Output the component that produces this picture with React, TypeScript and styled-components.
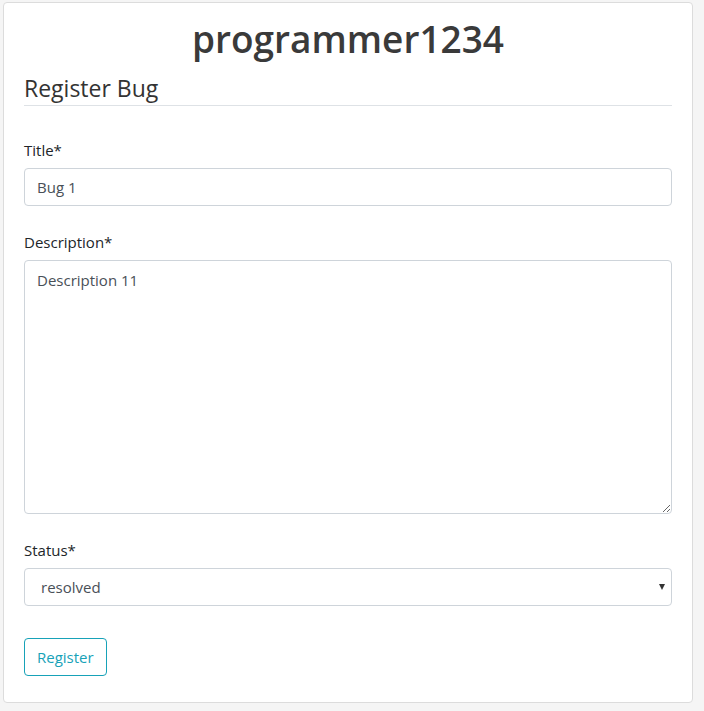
import React, { useState } from 'react';
import styled, { createGlobalStyle } from 'styled-components';

const GlobalStyle = createGlobalStyle`
  * { box-sizing: border-box; }
  body {
    margin: 0;
    background: #f5f5f5;
    font-family: "Segoe UI", "Open Sans", "Noto Sans", sans-serif;
    color: #212529;
  }
`;

const Page = styled.div`
  padding: 2px 11px 9px 3px;
`;

const Card = styled.div`
  background: #fff;
  border: 1px solid #dcdcdc;
  border-radius: 4px;
  padding: 12px 20px 26px 20px;
`;

const Heading = styled.h1`
  margin: 0;
  text-align: center;
  font-size: 37px;
  line-height: 48px;
  font-weight: 600;
  color: #3a3a3a;
`;

const SubHeading = styled.h3`
  margin: 10px 0 0 0;
  font-size: 23px;
  line-height: 30px;
  font-weight: 400;
  color: #333;
  padding-bottom: 2px;
  border-bottom: 1px solid #dee2e6;
`;

const Form = styled.form`
  display: flex;
  flex-direction: column;
  margin-top: 32px;
`;

const Group = styled.div`
  display: flex;
  flex-direction: column;
  margin-bottom: 24px;
`;

const Label = styled.label`
  font-size: 15px;
  line-height: 24px;
  margin-bottom: 6px;
  color: #212529;
`;

const fieldBase = `
  width: 100%;
  font-family: inherit;
  font-size: 15px;
  color: #495057;
  background: #fff;
  border: 1px solid #ced4da;
  border-radius: 4px;
  outline: none;
`;

const Input = styled.input`
  ${fieldBase}
  height: 38px;
  padding: 0 12px;
`;

const TextArea = styled.textarea`
  ${fieldBase}
  height: 254px;
  padding: 7px 12px;
  line-height: 24px;
  display: block;
`;

const SelectWrap = styled.div`
  position: relative;
`;

const Select = styled.select`
  ${fieldBase}
  height: 38px;
  padding: 0 12px 0 16px;
  appearance: none;
  -webkit-appearance: none;
`;

const Caret = styled.span`
  position: absolute;
  right: 7px;
  top: 16px;
  width: 0;
  height: 0;
  border-left: 3.5px solid transparent;
  border-right: 3.5px solid transparent;
  border-top: 6px solid #333;
  pointer-events: none;
`;

const Button = styled.button`
  align-self: flex-start;
  margin-top: 8px;
  height: 38px;
  padding: 0 12px;
  font-family: inherit;
  font-size: 15px;
  color: #17a2b8;
  background: #fff;
  border: 1px solid #17a2b8;
  border-radius: 4px;
  cursor: pointer;
`;

export default function App() {
  const [title, setTitle] = useState('Bug 1');
  const [description, setDescription] = useState('Description 11');
  const [status, setStatus] = useState('resolved');

  return (
    <Page>
      <GlobalStyle />
      <Card>
        <Heading>programmer1234</Heading>
        <SubHeading>Register Bug</SubHeading>
        <Form onSubmit={(e) => e.preventDefault()}>
          <Group>
            <Label>Title*</Label>
            <Input value={title} onChange={(e) => setTitle(e.target.value)} />
          </Group>
          <Group>
            <Label>Description*</Label>
            <TextArea value={description} onChange={(e) => setDescription(e.target.value)} />
          </Group>
          <Group>
            <Label>Status*</Label>
            <SelectWrap>
              <Select value={status} onChange={(e) => setStatus(e.target.value)}>
                <option value="open">open</option>
                <option value="in progress">in progress</option>
                <option value="resolved">resolved</option>
              </Select>
              <Caret />
            </SelectWrap>
          </Group>
          <Button type="submit">Register</Button>
        </Form>
      </Card>
    </Page>
  );
}
